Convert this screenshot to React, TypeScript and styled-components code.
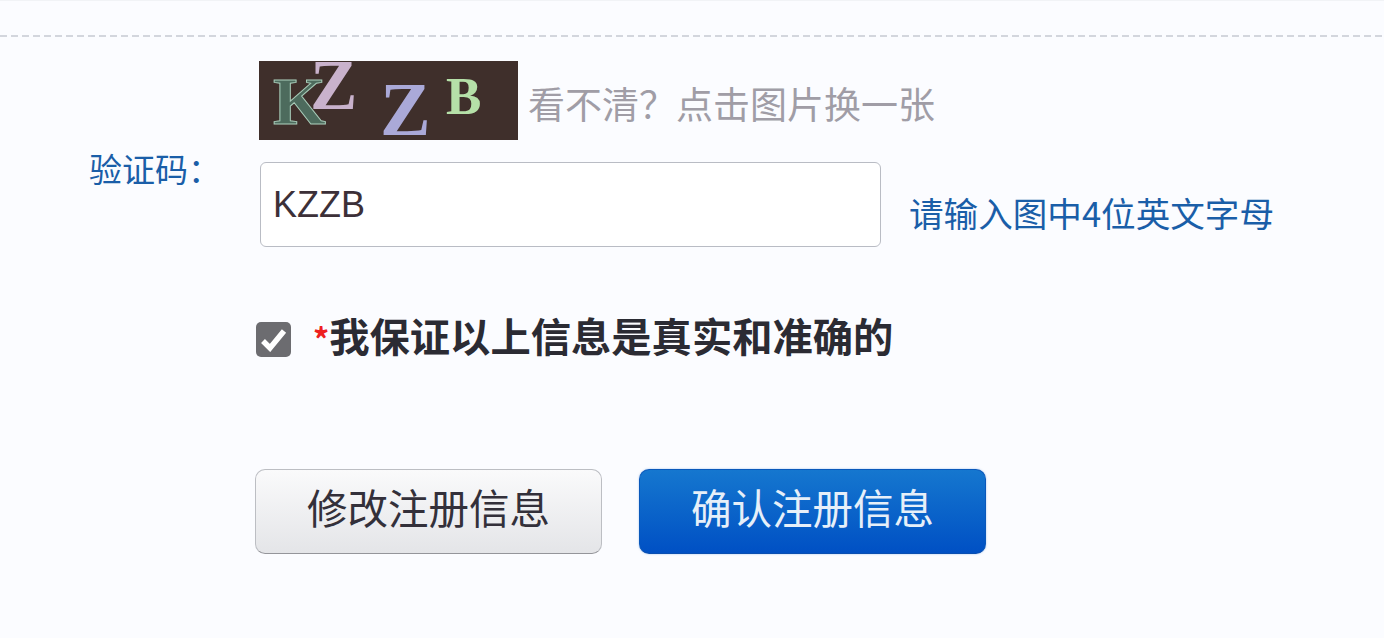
import React from 'react'
import styled, { createGlobalStyle } from 'styled-components'

const cjk = `"Noto Sans CJK SC", "Liberation Sans", sans-serif`

const GlobalStyle = createGlobalStyle`
    html, body {
        margin: 0;
        padding: 0;
        background: #fbfcff;
        font-family: ${cjk};
    }
`

const Page = styled.div`
    width: 1384px;
    height: 638px;
    overflow: hidden;
    box-sizing: border-box;
    padding-top: 34px;
    background: #fbfcff;
    border-top: 1px solid #f1f3f6;
`

const Divider = styled.div`
    height: 2px;
    background: repeating-linear-gradient(
        90deg,
        #d3d6dd 0 7px,
        transparent 7px 11px
    );
`

const Form = styled.form`
    padding: 24px 0 0 89px;
    display: flex;
    flex-direction: column;
`

const CaptchaRow = styled.div`
    display: grid;
    grid-template-columns: 170px auto;
    align-items: center;
`

const Label = styled.label`
    font-size: 33px;
    line-height: 40px;
    color: #1a5ea8;
    margin-top: 28px;
`

const CaptchaColumn = styled.div`
    display: flex;
    flex-direction: column;
    gap: 22px;
`

const CaptchaTop = styled.div`
    display: flex;
    align-items: center;
    gap: 10px;
`

const CaptchaImage = styled.div`
    position: relative;
    width: 259px;
    height: 79px;
    overflow: hidden;
    background: #3f2f2b;
    font-family: "Liberation Serif", serif;
    font-weight: bold;
`

const CaptchaLetter = styled.span<{
    $x: number
    $y: number
    $size: number
    $color: string
    $outline?: string
}>`
    position: absolute;
    left: ${(p) => p.$x}px;
    top: ${(p) => p.$y}px;
    font-size: ${(p) => p.$size}px;
    line-height: 0.7;
    color: ${(p) => p.$color};
    -webkit-text-stroke: 1px ${(p) => p.$outline || 'transparent'};
`

const Hint = styled.span`
    font-size: 37px;
    line-height: 50px;
    color: #a09da6;
    margin-top: 4px;
`

const InputRow = styled.div`
    display: flex;
    align-items: center;
    padding-left: 1px;
    gap: 28px;
`

const TextInput = styled.div`
    box-sizing: border-box;
    width: 621px;
    height: 85px;
    padding: 0 12px;
    display: flex;
    align-items: center;
    background: #fff;
    border: 1px solid #b9bcc4;
    border-radius: 6px;
    font-family: "Liberation Sans", sans-serif;
    font-size: 36px;
    color: #3c3038;
`

const InputTip = styled.span`
    font-size: 34.6px;
    line-height: 44px;
    color: #1a5ea8;
    margin-top: 14px;
`

const AgreeRow = styled.div`
    display: flex;
    align-items: center;
    margin: 63px 0 0 167px;
    gap: 22px;
`

const CheckBox = styled.span`
    width: 35px;
    height: 35px;
    border-radius: 5px;
    background: #6c6c70;
    display: flex;
    align-items: center;
    justify-content: center;
`

const AgreeText = styled.span`
    font-size: 40.3px;
    line-height: 50px;
    padding-bottom: 6px;
    font-weight: 700;
    color: #2b2b33;
    white-space: nowrap;
`

const Star = styled.span`
    color: #ee2020;
    font-size: 32px;
`

const Buttons = styled.div`
    display: flex;
    gap: 37px;
    margin: 100px 0 0 166px;
`

const ActionButton = styled.button<{ $primary?: boolean }>`
    width: 347px;
    height: 85px;
    border-radius: 10px;
    font-family: ${cjk};
    font-size: 40.5px;
    padding: 0 0 10px;
    color: ${(p) => (p.$primary ? '#e6eff9' : '#33303a')};
    border: 1px solid ${(p) => (p.$primary ? '#0a58bb' : '#bcbec3')};
    border-bottom-color: ${(p) => (p.$primary ? '#0a4fb0' : '#94959a')};
    background: ${(p) =>
        p.$primary
            ? 'linear-gradient(#1577cf, #0050c4)'
            : 'linear-gradient(#fafafb, #e4e5e8)'};
    box-shadow: ${(p) =>
        p.$primary ? '0 0 2px rgba(60, 130, 220, 0.5)' : 'none'};
`

const App: React.FC = () => {
    return (
        <>
            <GlobalStyle />
            <Page>
                <Divider />
                <Form>
                    <CaptchaRow>
                        <Label>验证码：</Label>
                        <CaptchaColumn>
                            <CaptchaTop>
                                <CaptchaImage>
                                    <CaptchaLetter $x={14} $y={17} $size={68} $color="#4d6b5d" $outline="#a8ccb9">K</CaptchaLetter>
                                    <CaptchaLetter $x={51} $y={0} $size={71} $color="#c9b2cc">Z</CaptchaLetter>
                                    <CaptchaLetter $x={121} $y={22} $size={76} $color="#aaa9d8">Z</CaptchaLetter>
                                    <CaptchaLetter $x={187} $y={17} $size={53} $color="#b5e0a8">B</CaptchaLetter>
                                </CaptchaImage>
                                <Hint>看不清？点击图片换一张</Hint>
                            </CaptchaTop>
                            <InputRow>
                                <TextInput>KZZB</TextInput>
                                <InputTip>请输入图中4位英文字母</InputTip>
                            </InputRow>
                        </CaptchaColumn>
                    </CaptchaRow>
                    <AgreeRow>
                        <CheckBox>
                            <svg width="27" height="25" viewBox="0 0 27 25">
                                <path d="M3 14l7 7L24 4" fill="none" stroke="#fff" strokeWidth="5.5" />
                            </svg>
                        </CheckBox>
                        <AgreeText><Star>*</Star>我保证以上信息是真实和准确的</AgreeText>
                    </AgreeRow>
                    <Buttons>
                        <ActionButton type="button">修改注册信息</ActionButton>
                        <ActionButton type="button" $primary>确认注册信息</ActionButton>
                    </Buttons>
                </Form>
            </Page>
        </>
    )
}

export default App
